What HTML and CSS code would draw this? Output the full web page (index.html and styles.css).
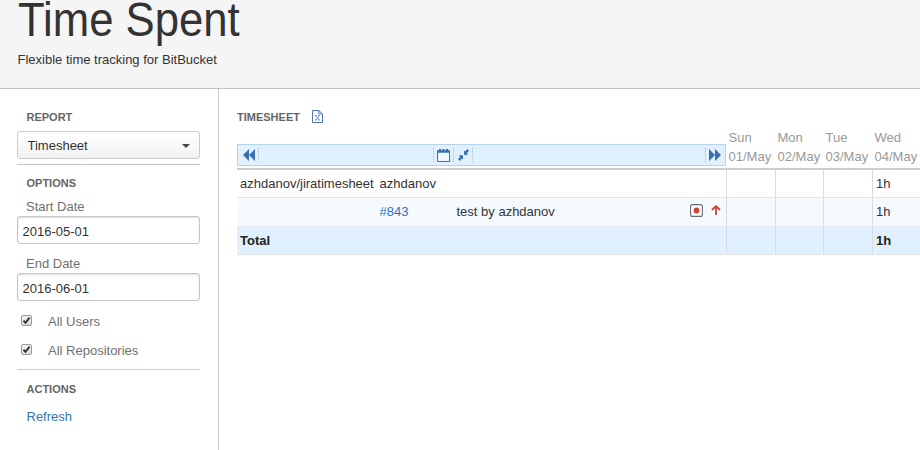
FILE: index.html
```
<!DOCTYPE html>
<html lang="en">
<head>
<meta charset="utf-8">
<title>Time Spent</title>
<link rel="stylesheet" href="styles.css">
</head>
<body>
<header class="header">
  <h1>Time Spent</h1>
  <p>Flexible time tracking for BitBucket</p>
</header>
<div class="page">
  <aside class="sidebar">
    <h2>REPORT</h2>
    <div class="select"><span>Timesheet</span><i class="caret"></i></div>
    <section class="options">
      <h2>OPTIONS</h2>
      <label class="label" for="start">Start Date</label>
      <input class="field" id="start" type="text" value="2016-05-01">
      <label class="label" for="end">End Date</label>
      <input class="field" id="end" type="text" value="2016-06-01">
      <div class="check"><span class="box"><svg viewBox="0 0 11 11"><path d="M2.5 5.6 4.5 7.8 8.6 2.6"/></svg></span>All Users</div>
      <div class="check"><span class="box"><svg viewBox="0 0 11 11"><path d="M2.5 5.6 4.5 7.8 8.6 2.6"/></svg></span>All Repositories</div>
    </section>
    <section class="actions">
      <h2>ACTIONS</h2>
      <a class="link">Refresh</a>
    </section>
  </aside>
  <main class="main">
    <div class="title">
      <h2>TIMESHEET</h2>
      <svg class="export" viewBox="0 0 11 13"><path d="M.5.5h6.3l3.7 3.4v8.6H.5zM6.8.5v3.4h3.7"/><path d="M3 5.5h1.7M6.3 5.5H8M3.8 5.5l3.4 4.5M7.2 5.5l-3.4 4.5M3 10h1.7M6.3 10H8" stroke-width=".8"/></svg>
    </div>
    <div class="sheet">
      <div class="row head">
        <div class="toolbar">
          <span class="tool prev"><svg width="12" height="12" viewBox="0 0 12 12"><path d="M6 0v12L0 6zM12 0v12L6 6z"/></svg></span>
          <span class="tool cal"><svg width="13" height="13" viewBox="0 0 13 13"><path d="M.5 2h12v10.5H.5z" stroke="#386fb0"/><path d="M0 1.5h2V0h2v1.5h1.5V0h2v1.5H9V0h2v1.5h2V3.8H0z"/></svg></span>
          <span class="tool fold"><svg width="11" height="12" viewBox="0 0 11 12"><path d="M6 1.5v4.2h4.3L8.7 4.2 11 1.7 9.3 0 7.2 2.6zM5 10.5V6.3H.7l1.6 1.5L0 10.3 1.7 12l2.1-2.6z"/></svg></span>
          <span class="tool next"><svg width="12" height="12" viewBox="0 0 12 12"><path d="M0 0v12l6-6zM6 0v12l6-6z"/></svg></span>
        </div>
        <div class="day">Sun<br>01/May</div>
        <div class="day">Mon<br>02/May</div>
        <div class="day">Tue<br>03/May</div>
        <div class="day">Wed<br>04/May</div>
      </div>
      <div class="row project">
        <div class="info"><span>azhdanov/jiratimesheet</span><span>azhdanov</span></div>
        <div class="cell"></div><div class="cell"></div><div class="cell"></div><div class="cell">1h</div>
      </div>
      <div class="row issue">
        <div class="info"><span></span><a class="link">#843</a><span>test by azhdanov</span>
          <span class="icons">
            <svg width="13" height="13" viewBox="0 0 13 13"><rect x=".6" y=".6" width="11.8" height="11.8" rx="2" fill="#fff" stroke="#6c6c6c" stroke-width="1.1"/><circle cx="6.5" cy="6.5" r="2.9" fill="#d04437"/></svg>
            <svg class="up" width="10" height="10" viewBox="0 0 10 10"><path d="M5 10V1.5M.9 5 5 1.1 9.1 5" fill="none" stroke="#d04437" stroke-width="1.8"/></svg>
          </span>
        </div>
        <div class="cell"></div><div class="cell"></div><div class="cell"></div><div class="cell">1h</div>
      </div>
      <div class="row total">
        <div class="info"><span>Total</span></div>
        <div class="cell"></div><div class="cell"></div><div class="cell"></div><div class="cell">1h</div>
      </div>
    </div>
  </main>
</div>
</body>
</html>
```
FILE: styles.css
```
* { box-sizing: border-box; }
body { margin: 0; height: 450px; overflow: hidden; background: #fff; color: #333; font: 13px/18px "Liberation Sans", Arial, sans-serif; }
h1, h2, p { margin: 0; }
svg { display: block; }
.header { height: 89px; padding-left: 17.5px; background: #f5f5f5; border-bottom: 1px solid #c4c4c4; }
h1 { height: 51px; font-size: 48px; line-height: 40px; font-weight: 400; white-space: nowrap; transform: scaleX(.91); transform-origin: 0 0; }
h2 { padding-left: 9.5px; font-size: 11px; line-height: 16px; font-weight: 700; color: #666; }
.page { display: flex; height: 361px; }
.sidebar { width: 219px; padding: 20px 19px 0 17px; border-right: 1px solid #ccc; flex: none; }
.select { display: flex; align-items: center; justify-content: space-between; width: 183px; height: 28px; margin-top: 6px; padding: 1px 9px 0 9.5px; border: 1px solid #ccc; border-radius: 3px; background: linear-gradient(#fff, #f2f2f2); }
.caret { border: 4px solid transparent; border-top-color: #444; border-bottom: 0; }
.options { margin-top: 5px; width: 183px; padding-top: 10px; border-top: 1px solid #c4c4c4; }
.label { display: block; height: 18px; margin-top: 7px; padding-left: 9px; color: #707070; }
.field { display: block; width: 183px; height: 28px; padding: 2px 5px 0 4.5px; border: 1px solid #c6c6c6; border-radius: 3px; font: inherit; color: #333; box-shadow: inset 0 1px 2px #ddd; outline: 0; }
.field + .label { margin-top: 11px; }
.check { display: flex; align-items: center; height: 18px; margin-top: 11px; color: #707070; }
.check:first-of-type { margin-top: 12px; }
.box { width: 11px; height: 11px; margin: -4px 16px 0 4px; border: 1px solid #999; border-radius: 2px; background: linear-gradient(#f2f2f2, #ddd); }
.box svg { width: 11px; height: 11px; margin: -1px; fill: none; stroke: #333; stroke-width: 2; }
.actions { width: 183px; margin-top: 9px; padding-top: 11px; border-top: 1px solid #ccc; }
.actions .link { display: block; padding-left: 9.5px; margin-top: 11px; }
.link { color: #3572b0; }
.main { flex: none; width: 702px; padding: 19px 0 0 18px; }
.title { display: flex; align-items: center; height: 17px; }
.title h2 { padding: 0; width: 75px; }
.export { width: 11px; height: 13px; fill: none; stroke: #5075b5; }
.sheet { margin-top: 3px; width: 683px; }
.row { display: grid; grid-template-columns: 489px 49px 48px 49px 48px; }
.head { height: 42px; border-bottom: 2px solid #ccc; }
.toolbar { display: flex; align-items: center; height: 22px; margin-top: 16px; background: #e0f0ff; border: 1px solid #b5d4ed; }
.tool { display: flex; align-items: center; height: 14px; border-right: 1px dotted #bbb; }
.tool path { fill: #386fb0; }
.tool path[stroke] { fill: #f1f8ff; }
.prev { width: 21px; padding-left: 5px; }
.cal { width: 21px; margin-left: 174px; padding-left: 3px; border-left: 1px dotted #bbb; }
.fold { width: 19px; padding-left: 4px; }
.next { width: 20px; margin-left: auto; padding-left: 3px; border-right: 0; border-left: 1px dotted #bbb; }
.day { padding: 0 0 0 2.5px; color: #999; line-height: 19px; }
.project { height: 28px; border-bottom: 1px solid #e4e4e4; }
.project .info, .project .cell { padding-top: 1px; }
.issue { height: 29px; background: #f5faff; border-bottom: 1px solid #e4eaf0; }
.total { height: 28px; background: #e0f0ff; border-bottom: 1px solid #e2e5e8; font-weight: 700; color: #222; }
.info { display: grid; grid-template-columns: 139.5px 77px 233.5px 1fr; align-items: center; padding-left: 3px; }
.cell { display: flex; align-items: center; padding-left: 3px; border-left: 1px solid #d8dce0; }
.icons { display: flex; margin-top: -3px; }
.up { margin: 1px 0 0 8px; }
```
